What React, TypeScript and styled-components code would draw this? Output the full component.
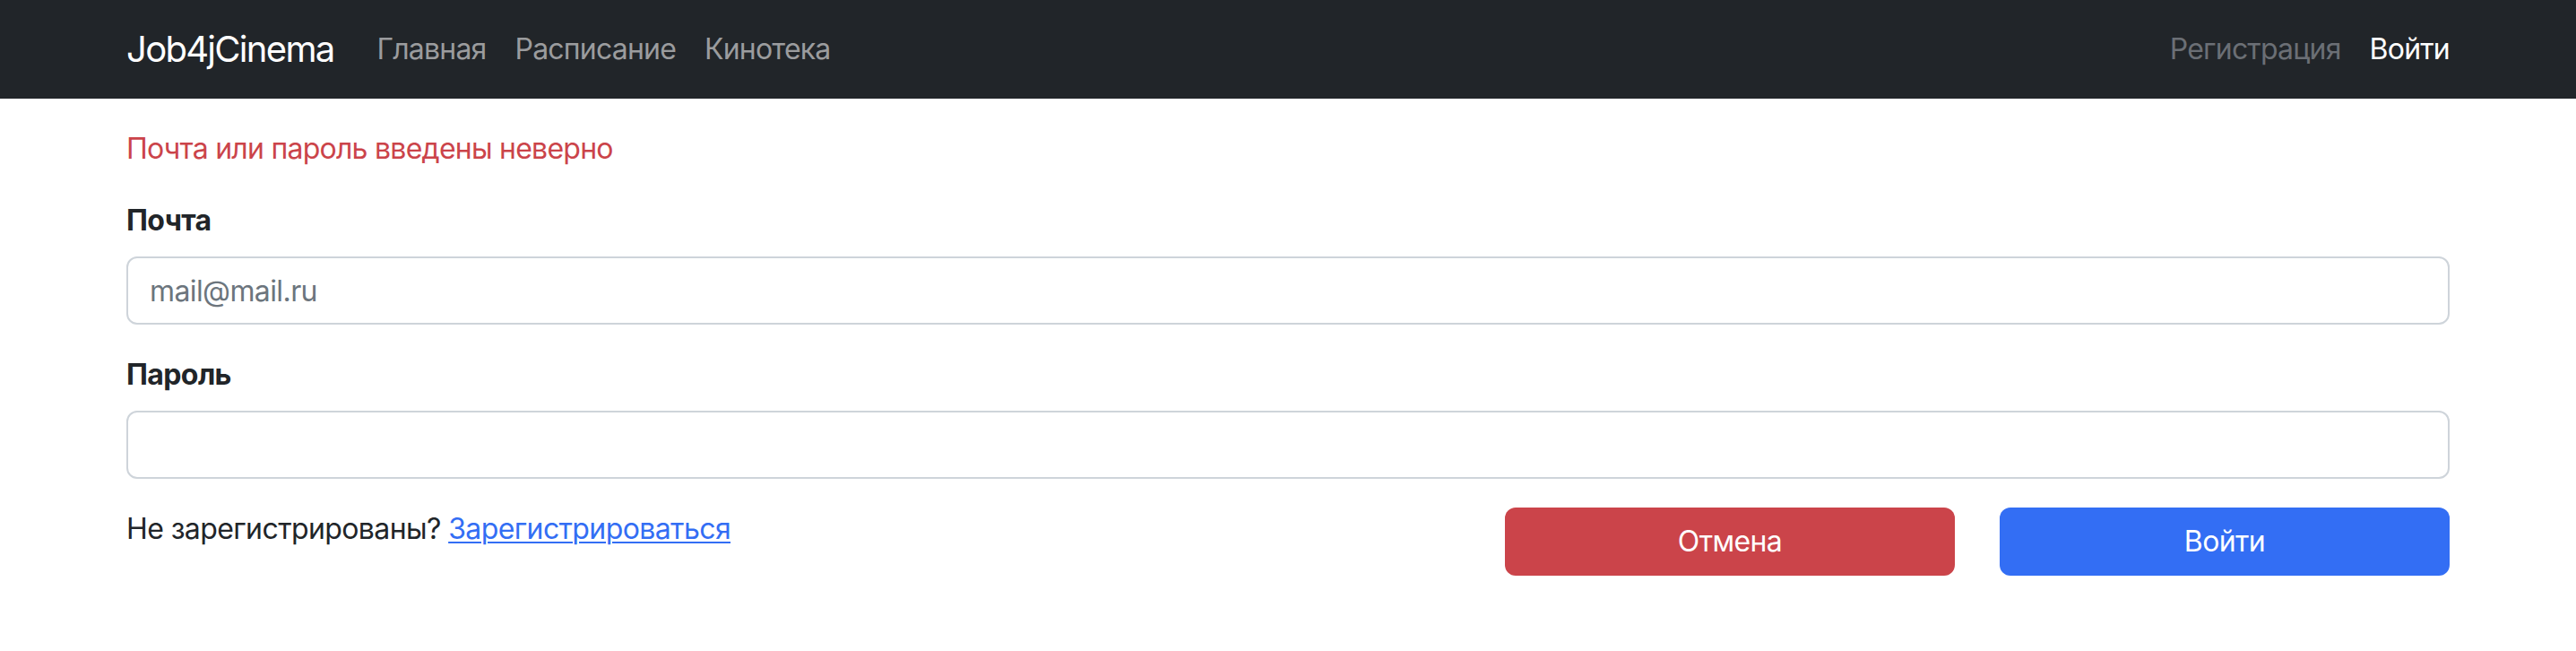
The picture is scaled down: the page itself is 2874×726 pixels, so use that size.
import React from "react";
import styled, { createGlobalStyle } from "styled-components";

const GlobalStyle = createGlobalStyle`
  *, *::before, *::after { box-sizing: border-box; }
  html, body { margin: 0; padding: 0; background: #ffffff; }
  body {
    font-family: Inter, "Noto Sans", "Liberation Sans", sans-serif;
    font-size: 32px;
    line-height: 48px;
    color: #212529;
    -webkit-font-smoothing: antialiased;
  }
`;

const Navbar = styled.nav`
  height: 110px;
  background: #212529;
  display: flex;
  align-items: center;
`;

const NavContainer = styled.div`
  width: 2640px;
  margin: 0 auto;
  padding: 0 24px;
  display: flex;
  align-items: center;
`;

const Brand = styled.a`
  color: #ffffff;
  font-size: 40px;
  line-height: 60px;
  padding: 10px 0;
  margin-right: 32px;
  text-decoration: none;
  letter-spacing: -1.7px;
`;

const NavList = styled.div<{ $end?: boolean }>`
  display: flex;
  align-items: center;
  margin-left: ${(p) => (p.$end ? "auto" : "0")};
`;

const NavLink = styled.a<{ $tone: "muted" | "dim" | "active" }>`
  padding: 16px 16px;
  font-size: 32px;
  line-height: 48px;
  text-decoration: none;
  letter-spacing: -0.8px;
  color: ${(p) =>
    p.$tone === "active" ? "#ffffff" : p.$tone === "dim" ? "#6b6f75" : "#9b9c9e"};
  &:last-child { padding-right: 0; }
`;

const Main = styled.main`
  width: 2640px;
  margin: 0 auto;
  padding: 32px 24px 0;
`;

const ErrorText = styled.div`
  color: #cb444a;
  margin-bottom: 32px;
  letter-spacing: -0.75px;
`;

const Field = styled.div`
  margin-bottom: 32px;
`;

const Label = styled.label`
  display: block;
  font-weight: 700;
  margin-bottom: 16px;
  letter-spacing: -0.6px;
`;

const Input = styled.input`
  display: block;
  width: 100%;
  height: 76px;
  padding: 12px 24px;
  font-family: inherit;
  font-size: 32px;
  line-height: 48px;
  color: #212529;
  background: #ffffff;
  border: 2px solid #ced4da;
  border-radius: 12px;
  outline: none;
  letter-spacing: -0.6px;
  &::placeholder { color: #6c757d; opacity: 1; }
`;

const Footer = styled.div`
  display: grid;
  grid-template-columns: 1fr 502px 502px;
  column-gap: 50px;
  align-items: start;
`;

const Hint = styled.div`
  letter-spacing: -0.6px;
`;

const HintLink = styled.a`
  color: #336ef4;
  text-decoration: underline;
  text-underline-offset: 3px;
  text-decoration-thickness: 2px;
`;

const Button = styled.button<{ $variant: "danger" | "primary" }>`
  height: 76px;
  padding: 12px 24px;
  font-family: inherit;
  font-size: 32px;
  line-height: 48px;
  letter-spacing: -0.6px;
  color: #ffffff;
  border: 2px solid transparent;
  border-radius: 12px;
  cursor: pointer;
  background: ${(p) => (p.$variant === "danger" ? "#cb444a" : "#336ef4")};
`;

export default function App() {
  return (
    <>
      <GlobalStyle />
      <Navbar>
        <NavContainer>
          <Brand href="#">Job4jCinema</Brand>
          <NavList>
            <NavLink $tone="muted" href="#">Главная</NavLink>
            <NavLink $tone="muted" href="#">Расписание</NavLink>
            <NavLink $tone="muted" href="#">Кинотека</NavLink>
          </NavList>
          <NavList $end>
            <NavLink $tone="dim" href="#">Регистрация</NavLink>
            <NavLink $tone="active" href="#">Войти</NavLink>
          </NavList>
        </NavContainer>
      </Navbar>
      <Main>
        <ErrorText>Почта или пароль введены неверно</ErrorText>
        <Field>
          <Label htmlFor="email">Почта</Label>
          <Input id="email" type="email" placeholder="mail@mail.ru" />
        </Field>
        <Field>
          <Label htmlFor="password">Пароль</Label>
          <Input id="password" type="password" />
        </Field>
        <Footer>
          <Hint>
            Не зарегистрированы? <HintLink href="#">Зарегистрироваться</HintLink>
          </Hint>
          <Button $variant="danger" type="button">Отмена</Button>
          <Button $variant="primary" type="submit">Войти</Button>
        </Footer>
      </Main>
    </>
  );
}
